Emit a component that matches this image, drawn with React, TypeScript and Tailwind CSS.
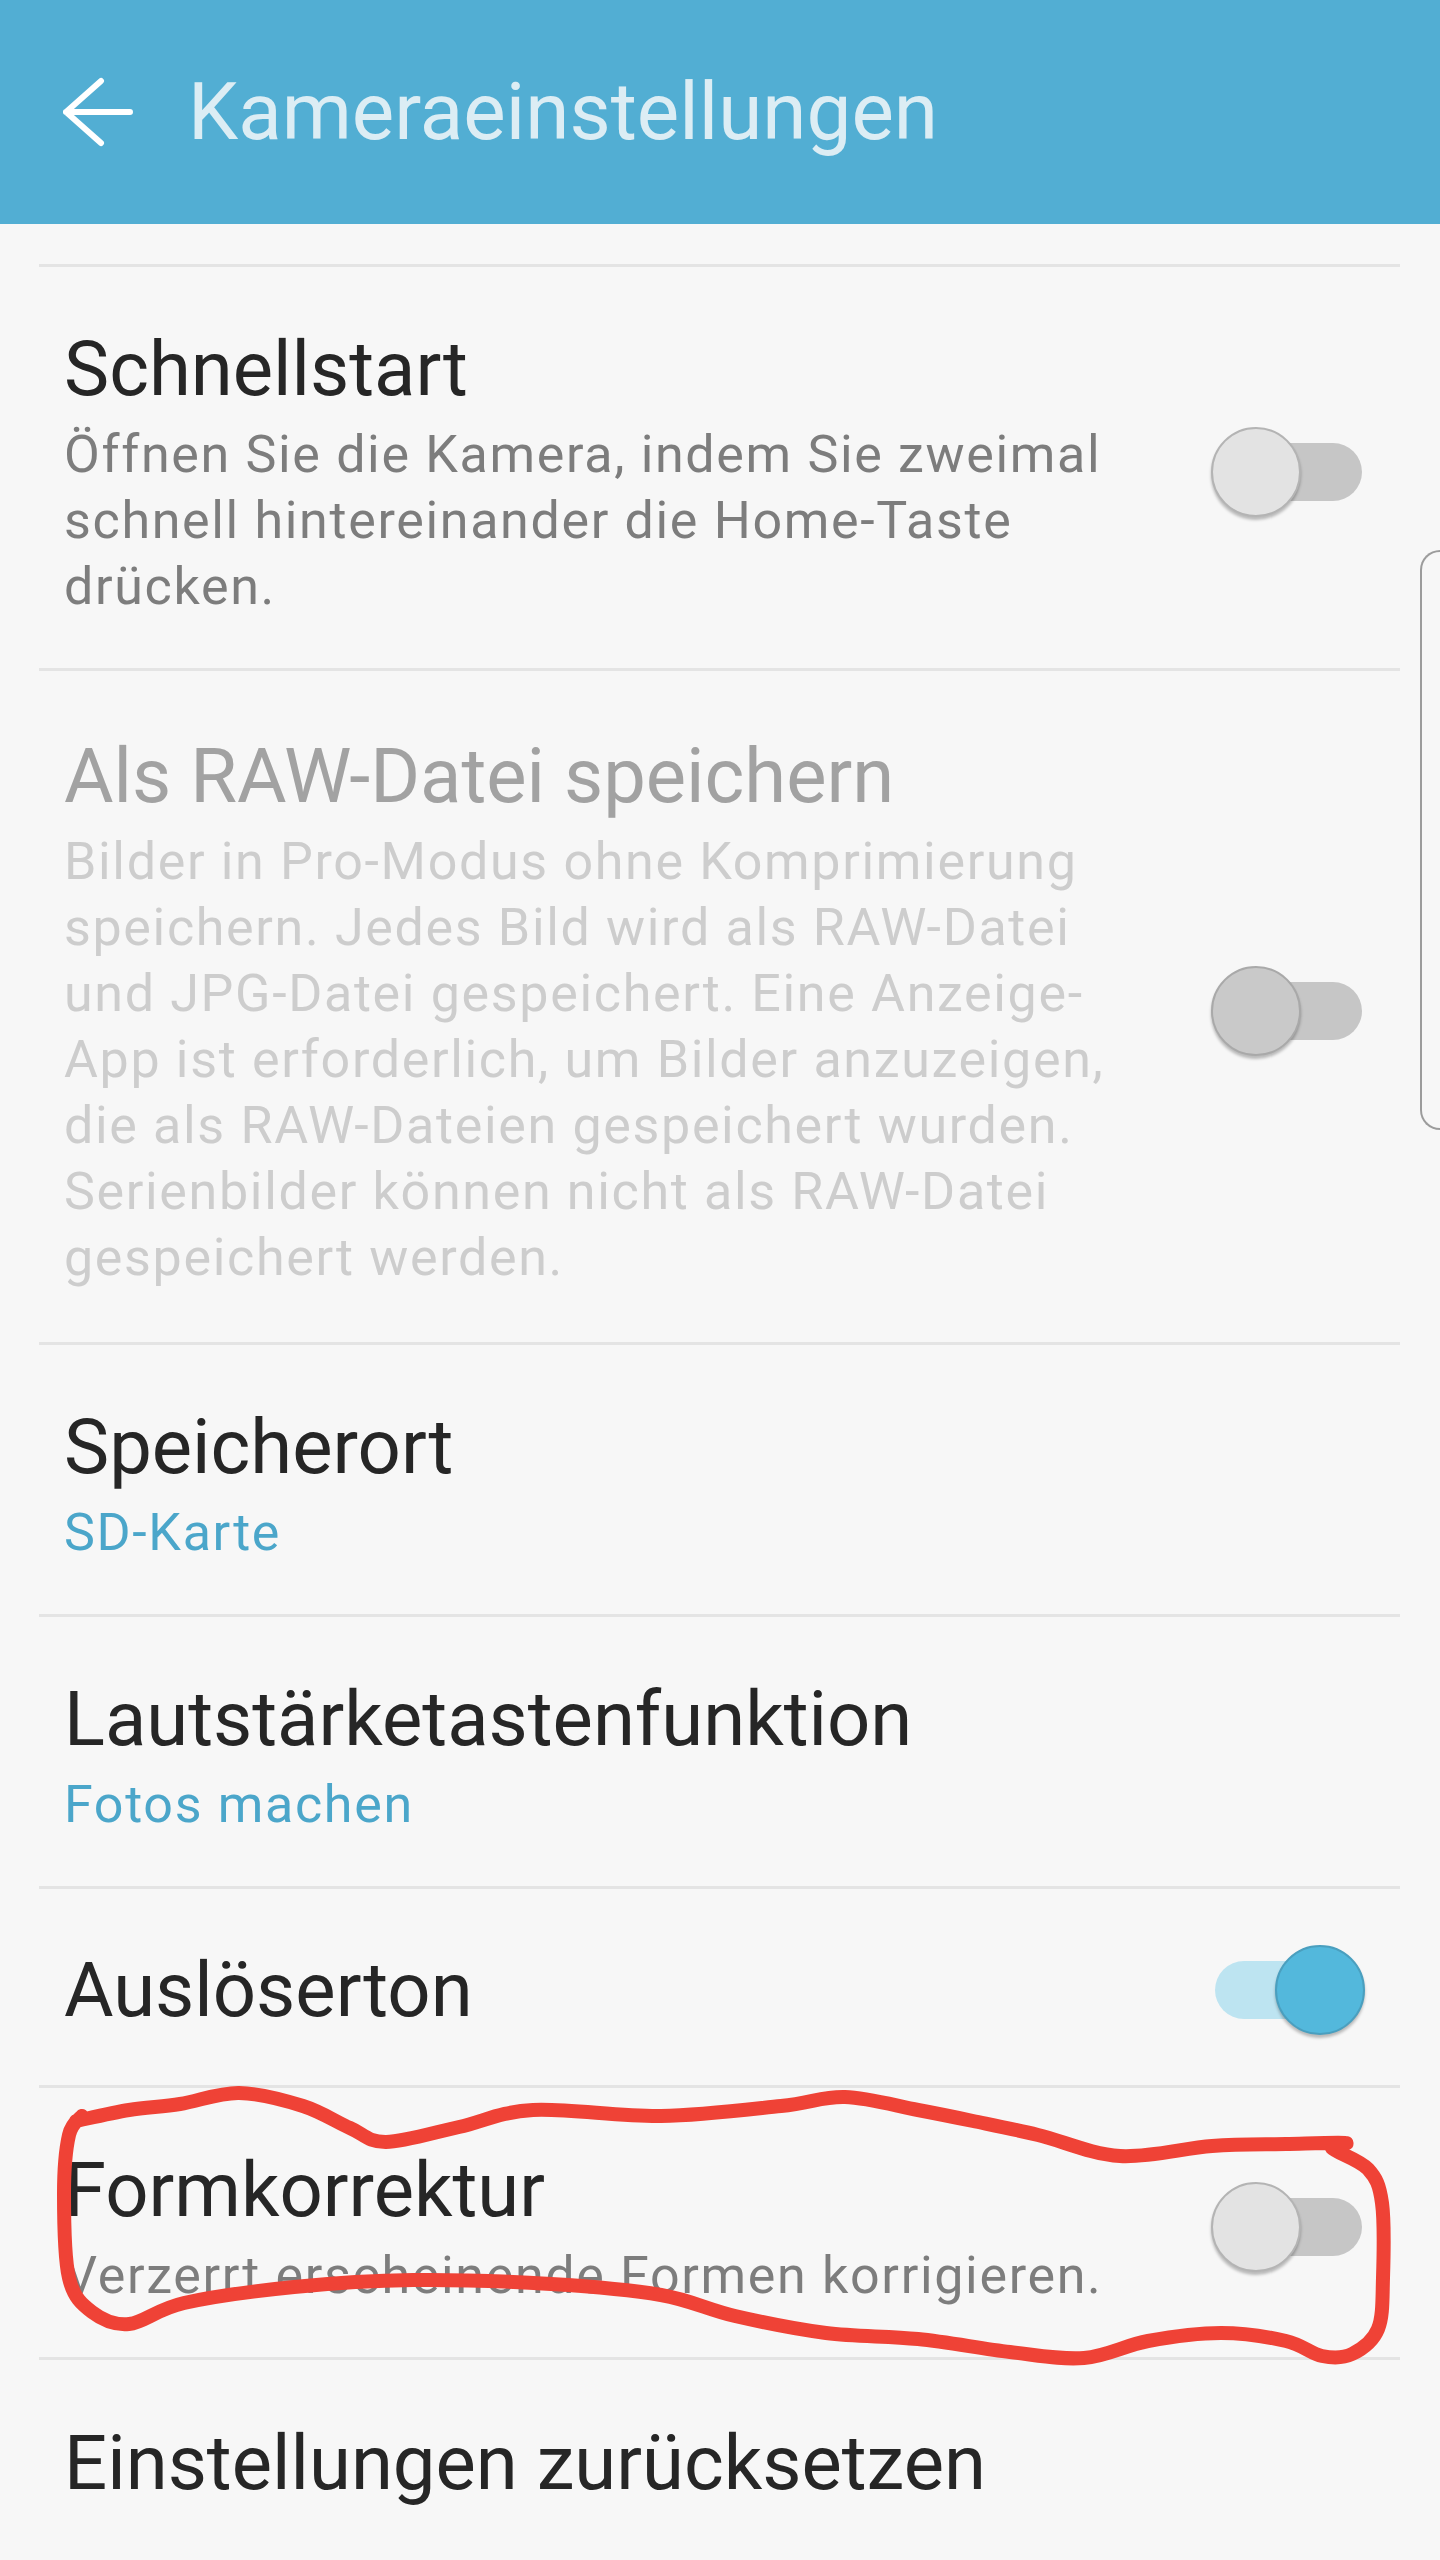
import { ReactNode } from "react";

type Pt = [number, number];

// hand-drawn red loop around "Formkorrektur"
const loop: Pt[] = [
  [76, 2121], [129, 2110], [180, 2104], [239, 2093], [303, 2106], [350, 2128],
  [386, 2142], [459, 2127], [533, 2110], [661, 2116], [781, 2106], [845, 2097],
  [918, 2110], [973, 2121], [1038, 2135], [1120, 2156], [1212, 2146], [1286, 2144],
  [1345, 2143], [1332, 2148], [1368, 2169], [1382, 2203], [1383, 2278], [1378, 2329],
  [1352, 2354], [1322, 2356], [1286, 2341], [1221, 2333], [1148, 2341], [1084, 2358],
  [1010, 2352], [918, 2339], [826, 2333], [735, 2316], [661, 2295], [551, 2284],
  [413, 2280], [294, 2287], [184, 2303], [129, 2324], [92, 2312], [69, 2278],
  [64, 2194], [69, 2135], [82, 2116],
];

function smoothPath(pts: Pt[]) {
  let d = `M${pts[0][0]} ${pts[0][1]}`;
  for (let i = 0; i < pts.length - 1; i++) {
    const p0 = pts[i - 1] ?? pts[i];
    const p1 = pts[i];
    const p2 = pts[i + 1];
    const p3 = pts[i + 2] ?? p2;
    const c1x = p1[0] + (p2[0] - p0[0]) / 6;
    const c1y = p1[1] + (p2[1] - p0[1]) / 6;
    const c2x = p2[0] - (p3[0] - p1[0]) / 6;
    const c2y = p2[1] - (p3[1] - p1[1]) / 6;
    d += ` C${c1x} ${c1y} ${c2x} ${c2y} ${p2[0]} ${p2[1]}`;
  }
  return d;
}

function Toggle({ on = false, disabled = false }: { on?: boolean; disabled?: boolean }) {
  return (
    <div className="relative w-[154px] h-[90px] shrink-0">
      <div
        className={
          "absolute left-[4px] right-[3px] top-[16px] h-[58px] rounded-full " +
          (on ? "bg-[#bde4f1]" : "bg-[#c6c6c6]")
        }
      />
      <div
        className={
          "absolute top-0 w-[90px] h-[90px] rounded-full border-2 shadow-[0_3px_3px_rgba(0,0,0,0.25)] " +
          (on
            ? "right-0 bg-[#53b8dc] border-[#4a9fbf]"
            : disabled
            ? "left-0 bg-[#c9c9c9] border-[#a9a9a9]"
            : "left-0 bg-[#e3e3e3] border-[#b4b4b4]")
        }
      />
    </div>
  );
}

function Divider() {
  return <div className="h-[3px] ml-[39px] mr-[40px] bg-[#e4e4e4]" />;
}

function Row({
  title,
  lines = [],
  sub,
  toggle,
  disabled = false,
  pad = "pt-[57px] pb-[48px]",
}: {
  title: string;
  lines?: string[];
  sub?: string;
  toggle?: ReactNode;
  disabled?: boolean;
  pad?: string;
}) {
  return (
    <div className={"flex items-center pl-[64px] pr-[75px] " + pad}>
      <div className="flex-1">
        <div
          className={
            "text-[76px] leading-[90px] whitespace-nowrap " +
            (disabled ? "text-[#a2a2a2]" : "text-[#262626]")
          }
        >
          {title}
        </div>
        {lines.length > 0 && (
          <div
            className={
              "mt-[8px] text-[52px] leading-[66px] tracking-[0.032em] " +
              (disabled ? "text-[#cdcdcd]" : "text-[#7d7d7d]")
            }
          >
            {lines.map((l) => (
              <div key={l} className="whitespace-nowrap">
                {l}
              </div>
            ))}
          </div>
        )}
        {sub && (
          <div className="mt-[8px] text-[52px] leading-[66px] tracking-[0.032em] text-[#4ba6ca] whitespace-nowrap">
            {sub}
          </div>
        )}
      </div>
      {toggle}
    </div>
  );
}

export default function App() {
  return (
    <main className="relative w-[1440px] min-h-[2560px] overflow-hidden bg-[#f7f7f7] font-['Roboto','Noto_Sans',sans-serif]">
      <header className="h-[224px] bg-[#52aed3] flex items-center">
        <svg width="70" height="70" viewBox="0 0 70 70" className="ml-[63px] shrink-0">
          <path
            d="M38 4 L3 35 L38 66 M3 35 L67 35"
            fill="none"
            stroke="#ffffff"
            strokeWidth="6"
            strokeLinecap="round"
          />
        </svg>
        <h1 className="ml-[55px] text-[80px] leading-[90px] text-[#dcedf4] whitespace-nowrap">
          Kameraeinstellungen
        </h1>
      </header>

      <div className="h-[40px]" />
      <Divider />
      <Row
        title="Schnellstart"
        lines={[
          "Öffnen Sie die Kamera, indem Sie zweimal",
          "schnell hintereinander die Home-Taste",
          "drücken.",
        ]}
        toggle={<Toggle />}
      />
      <Divider />
      <Row
        title="Als RAW-Datei speichern"
        disabled
        pad="pt-[60px] pb-[51px]"
        lines={[
          "Bilder in Pro-Modus ohne Komprimierung",
          "speichern. Jedes Bild wird als RAW-Datei",
          "und JPG-Datei gespeichert. Eine Anzeige-",
          "App ist erforderlich, um Bilder anzuzeigen,",
          "die als RAW-Dateien gespeichert wurden.",
          "Serienbilder können nicht als RAW-Datei",
          "gespeichert werden.",
        ]}
        toggle={<Toggle disabled />}
      />
      <Divider />
      <Row title="Speicherort" sub="SD-Karte" />
      <Divider />
      <Row title="Lautstärketastenfunktion" sub="Fotos machen" />
      <Divider />
      <Row title="Auslöserton" pad="pt-[56px] pb-[50px]" toggle={<Toggle on />} />
      <Divider />
      <Row
        title="Formkorrektur"
        lines={["Verzerrt erscheinende Formen korrigieren."]}
        toggle={<Toggle />}
      />
      <Divider />
      <Row title="Einstellungen zurücksetzen" pad="pt-[58px] pb-[50px]" />

      {/* edge-screen handle on the right */}
      <div className="absolute top-[550px] right-0 w-[20px] h-[580px] border-2 border-r-0 border-[#9c9c9c] rounded-l-[26px]" />

      <svg className="absolute inset-0 pointer-events-none" width="1440" height="2560" viewBox="0 0 1440 2560">
        <path
          d={smoothPath(loop)}
          fill="none"
          stroke="#ef4236"
          strokeWidth="14"
          strokeLinecap="round"
          strokeLinejoin="round"
        />
      </svg>
    </main>
  );
}
